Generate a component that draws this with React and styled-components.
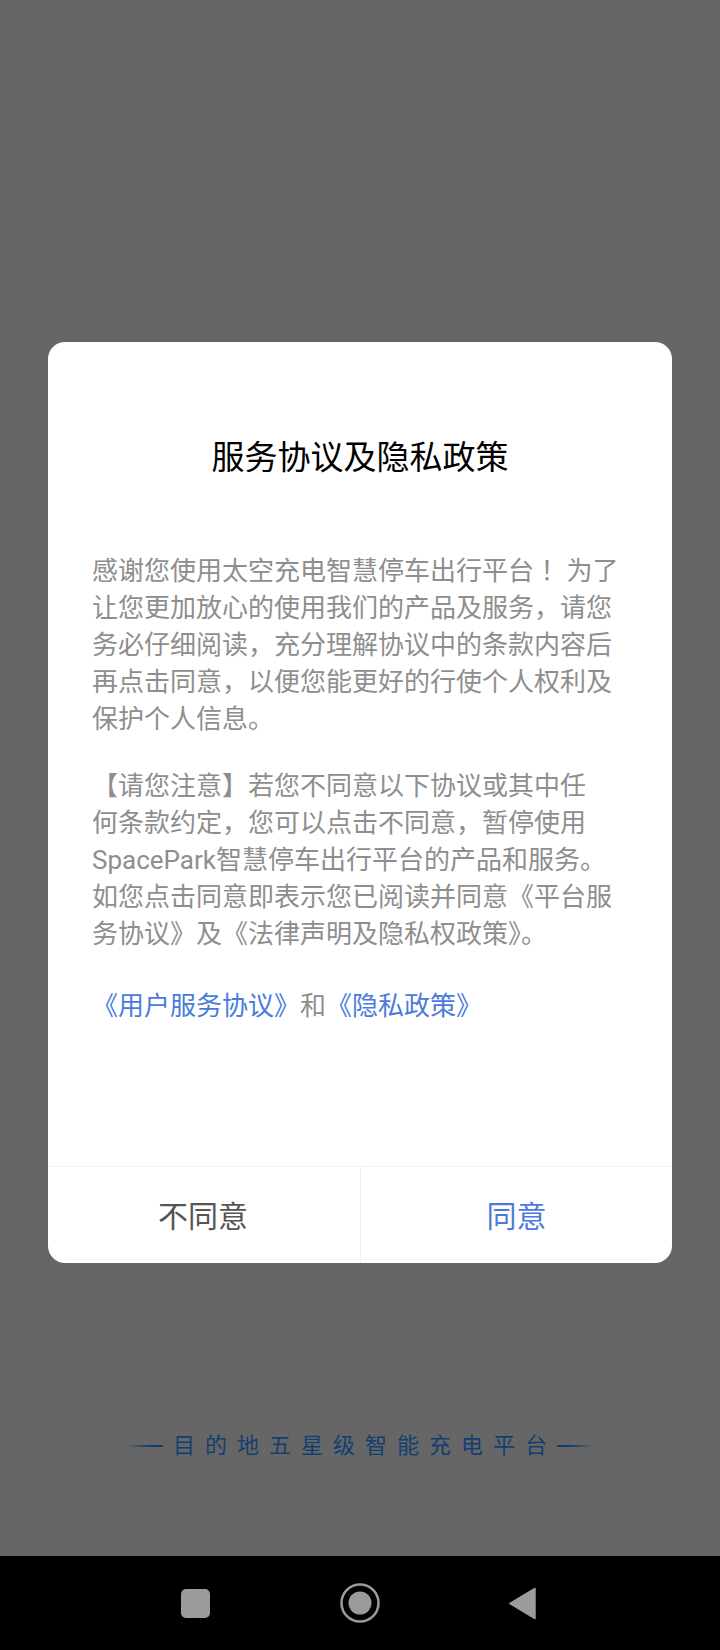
import React from 'react';
import styled, { createGlobalStyle } from 'styled-components';

const GlobalStyle = createGlobalStyle`
  html, body {
    margin: 0;
    padding: 0;
    background: #666666;
  }
  * {
    box-sizing: border-box;
  }
`;

const Page = styled.div`
  width: 720px;
  height: 1650px;
  display: flex;
  flex-direction: column;
  background: #666666;
  font-family: Roboto, "Noto Sans CJK SC", sans-serif;
`;

const Screen = styled.main`
  flex: 1;
  display: flex;
  flex-direction: column;
  align-items: center;
  padding-top: 342px;
`;

const Dialog = styled.section`
  width: 624px;
  height: 921px;
  display: flex;
  flex-direction: column;
  background: #ffffff;
  border-radius: 17px;
  overflow: hidden;
`;

const Title = styled.h1`
  margin: 0;
  padding-top: 93px;
  font-size: 33px;
  line-height: 46px;
  font-weight: 400;
  text-align: center;
  color: #000000;
`;

const Body = styled.div`
  flex: 1;
  display: flex;
  flex-direction: column;
  gap: 30px;
  padding: 72px 52px 0 44px;
`;

const Paragraph = styled.p`
  margin: ${(p) => (p.$links ? '5px 0 0' : '0')};
  font-size: 26px;
  line-height: 37px;
  color: #8e8e8e;
`;

const DocLink = styled.a`
  color: #4a7bdc;
  text-decoration: none;
`;

const Actions = styled.div`
  height: 97px;
  display: grid;
  grid-template-columns: 312px 1fr;
  border-top: 1px solid #f1f1f1;
`;

const ActionButton = styled.button`
  border: 0;
  padding: 0 ${(p) => (p.$primary ? '0' : '2px')} 2px 0;
  background: transparent;
  font-family: inherit;
  font-size: 30px;
  color: ${(p) => (p.$primary ? '#4a7bdc' : '#555555')};
  & + & {
    border-left: 1px solid #f1f1f1;
  }
`;

const Slogan = styled.div`
  margin-top: 167px;
  display: flex;
  align-items: center;
  gap: 10px;
  color: #133f70;
  font-size: 22px;
  line-height: 32px;
`;

const SloganText = styled.span`
  letter-spacing: 10px;
  margin-right: -10px;
`;

const SloganLine = styled.span`
  width: 36px;
  height: 2px;
  background: linear-gradient(
    ${(p) => (p.$right ? 'to left' : 'to right')},
    rgba(19, 63, 112, 0),
    #133f70 60%
  );
`;

const NavBar = styled.nav`
  height: 94px;
  flex-shrink: 0;
  display: flex;
  align-items: center;
  justify-content: space-between;
  padding: 0 184px 0 181px;
  background: #000000;
`;

const App = () => {
  return (
    <Page>
      <GlobalStyle />
      <Screen>
        <Dialog>
          <Title>服务协议及隐私政策</Title>
          <Body>
            <Paragraph>
              感谢您使用太空充电智慧停车出行平台 ！为了让您更加放心的使用我们的产品及服务，请您务必仔细阅读，充分理解协议中的条款内容后再点击同意，以便您能更好的行使个人权利及保护个人信息。
            </Paragraph>
            <Paragraph>
              【请您注意】若您不同意以下协议或其中任<br />何条款约定，您可以点击不同意，暂停使用SpacePark智慧停车出行平台的产品和服务。如您点击同意即表示您已阅读并同意《平台服务协议》及《法律声明及隐私权政策》。
            </Paragraph>
            <Paragraph $links>
              <DocLink href="#">《用户服务协议》</DocLink>和<DocLink href="#">《隐私政策》</DocLink>
            </Paragraph>
          </Body>
          <Actions>
            <ActionButton>不同意</ActionButton>
            <ActionButton $primary>同意</ActionButton>
          </Actions>
        </Dialog>
        <Slogan>
          <SloganLine />
          <SloganText>目的地五星级智能充电平台</SloganText>
          <SloganLine $right />
        </Slogan>
      </Screen>
      <NavBar>
        <svg width="29" height="29" viewBox="0 0 29 29">
          <rect width="29" height="29" rx="5" fill="#9b9b9b" />
        </svg>
        <svg width="40" height="40" viewBox="0 0 40 40">
          <circle cx="20" cy="20" r="18.5" fill="none" stroke="#9b9b9b" strokeWidth="2.5" />
          <circle cx="20" cy="20" r="11.5" fill="#9b9b9b" />
        </svg>
        <svg width="27" height="33" viewBox="0 0 27 33">
          <path d="M26 1.5 L1 16.5 L26 31.5 Z" fill="#9b9b9b" stroke="#9b9b9b" strokeWidth="1.5" strokeLinejoin="round" />
        </svg>
      </NavBar>
    </Page>
  );
};

export default App;
